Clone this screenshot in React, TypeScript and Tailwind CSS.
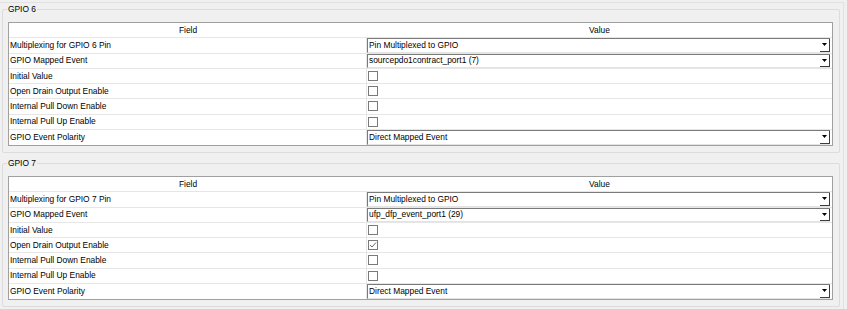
import React from 'react';

type Row =
  | { label: string; kind: 'select'; value: string }
  | { label: string; kind: 'check'; checked: boolean };

const groups: { title: string; rows: Row[] }[] = [
  {
    title: 'GPIO 6',
    rows: [
      { label: 'Multiplexing for GPIO 6 Pin', kind: 'select', value: 'Pin Multiplexed to GPIO' },
      { label: 'GPIO Mapped Event', kind: 'select', value: 'sourcepdo1contract_port1 (7)' },
      { label: 'Initial Value', kind: 'check', checked: false },
      { label: 'Open Drain Output Enable', kind: 'check', checked: false },
      { label: 'Internal Pull Down Enable', kind: 'check', checked: false },
      { label: 'Internal Pull Up Enable', kind: 'check', checked: false },
      { label: 'GPIO Event Polarity', kind: 'select', value: 'Direct Mapped Event' },
    ],
  },
  {
    title: 'GPIO 7',
    rows: [
      { label: 'Multiplexing for GPIO 7 Pin', kind: 'select', value: 'Pin Multiplexed to GPIO' },
      { label: 'GPIO Mapped Event', kind: 'select', value: 'ufp_dfp_event_port1 (29)' },
      { label: 'Initial Value', kind: 'check', checked: false },
      { label: 'Open Drain Output Enable', kind: 'check', checked: true },
      { label: 'Internal Pull Down Enable', kind: 'check', checked: false },
      { label: 'Internal Pull Up Enable', kind: 'check', checked: false },
      { label: 'GPIO Event Polarity', kind: 'select', value: 'Direct Mapped Event' },
    ],
  },
];

function Select({ value }: { value: string }) {
  return (
    <div className="flex h-full w-[463px] items-center border-t border-l border-[#7a7a7a] border-b border-b-[#e3e3e3] bg-white">
      <span className="flex-1 truncate pl-[1px] leading-none">{value}</span>
      <div className="flex h-full w-[10px] items-center justify-center border-r border-b border-[#3c3c3c]">
        <svg width="5" height="3" viewBox="0 0 5 3">
          <path d="M0 0h5L2.5 3z" fill="#000" />
        </svg>
      </div>
    </div>
  );
}

function Check({ checked }: { checked: boolean }) {
  return (
    <div className="ml-[1px] flex h-[10px] w-[10px] items-center justify-center border border-[#7a7a7a] bg-white">
      {checked && (
        <svg width="8" height="8" viewBox="0 0 8 8">
          <path d="M1 4l2 2 4-4.5" fill="none" stroke="#6a6a6a" strokeWidth="1" />
        </svg>
      )}
    </div>
  );
}

function Group({ title, rows, first }: { title: string; rows: Row[]; first?: boolean }) {
  return (
    <div
      className={`relative ml-[2px] w-[838px] rounded-[2px] border border-[#dcdcdc] pt-[12px] pl-[5px] pr-[6px] pb-[6px] ${first ? 'mt-[6px]' : 'mt-[10px]'}`}
    >
      <span className="absolute -top-[6px] left-[4px] bg-[#f0f0f0] px-[1px] leading-[11px]">{title}</span>
      <div className="w-[825px] border border-[#a0a0a0] bg-white">
        <div className="flex h-[15.25px] items-center border-b border-[#e6e6e6]">
          <div className="w-[358px] text-center">Field</div>
          <div className="flex-1 text-center">Value</div>
        </div>
        {rows.map((row, i) => (
          <div
            key={i}
            className={`flex h-[15.25px] items-stretch ${i < rows.length - 1 ? 'border-b border-[#e6e6e6]' : ''}`}
          >
            <div className="flex w-[358px] items-center border-r border-[#e6e6e6] pl-[1px]">{row.label}</div>
            <div className="flex flex-1 items-center">
              {row.kind === 'select' ? <Select value={row.value} /> : <Check checked={row.checked} />}
            </div>
          </div>
        ))}
      </div>
    </div>
  );
}

export default function App() {
  return (
    <div className="h-[309px] w-[847px] overflow-hidden bg-[#f0f0f0] font-['Liberation_Sans',Arial,sans-serif] text-[8.4px] text-black">
      <div className="mt-[2px] h-[307px] w-[844px] border-t border-r border-[#e2e2e2]">
        {groups.map((g, i) => (
          <Group key={g.title} title={g.title} rows={g.rows} first={i === 0} />
        ))}
      </div>
    </div>
  );
}
